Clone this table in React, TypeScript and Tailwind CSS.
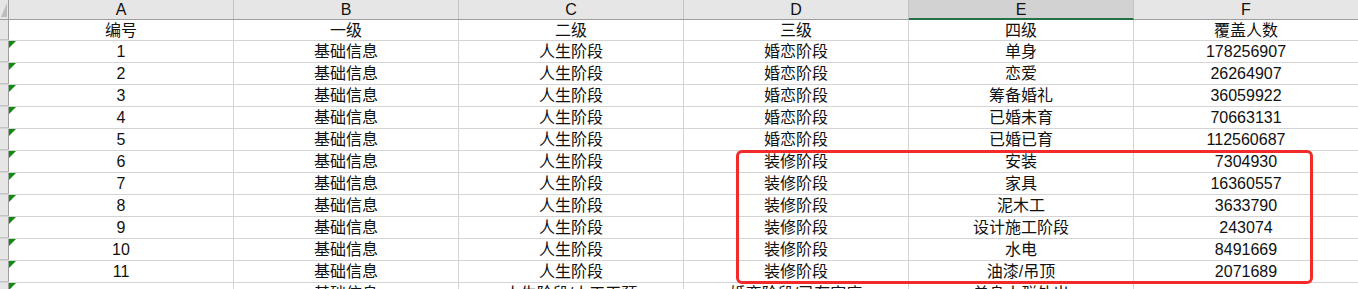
import React from "react";

const cols = ["A", "B", "C", "D", "E", "F"];

const rows: string[][] = [
  ["编号", "一级", "二级", "三级", "四级", "覆盖人数"],
  ["1", "基础信息", "人生阶段", "婚恋阶段", "单身", "178256907"],
  ["2", "基础信息", "人生阶段", "婚恋阶段", "恋爱", "26264907"],
  ["3", "基础信息", "人生阶段", "婚恋阶段", "筹备婚礼", "36059922"],
  ["4", "基础信息", "人生阶段", "婚恋阶段", "已婚未育", "70663131"],
  ["5", "基础信息", "人生阶段", "婚恋阶段", "已婚已育", "112560687"],
  ["6", "基础信息", "人生阶段", "装修阶段", "安装", "7304930"],
  ["7", "基础信息", "人生阶段", "装修阶段", "家具", "16360557"],
  ["8", "基础信息", "人生阶段", "装修阶段", "泥木工", "3633790"],
  ["9", "基础信息", "人生阶段", "装修阶段", "设计施工阶段", "243074"],
  ["10", "基础信息", "人生阶段", "装修阶段", "水电", "8491669"],
  ["11", "基础信息", "人生阶段", "装修阶段", "油漆/吊顶", "2071689"],
  ["", "基础信息", "人生阶段/人工干预", "婚恋阶段/已有家庭", "单身人群外出", ""],
];

function Flag() {
  return (
    <span className="absolute left-0 top-0 w-0 h-0 border-t-[7px] border-r-[7px] border-t-[#138a13] border-r-transparent" />
  );
}

export default function App() {
  return (
    <div
      className="relative w-[1358px] h-[289px] overflow-hidden bg-white text-[16px] text-[#111]"
      style={{ fontFamily: '"Liberation Sans", "Noto Sans CJK SC", sans-serif' }}
    >
      {/* column header */}
      <div className="flex h-[20px] bg-[#e6e6e6] border-b border-[#9e9e9e]">
        <div className="relative w-[9px] shrink-0 border-r border-[#9e9e9e]">
          <span className="absolute right-[1px] bottom-[2px] w-0 h-0 border-b-[14px] border-l-[6px] border-b-[#bcbcbc] border-l-transparent" />
        </div>
        {cols.map((c) => (
          <div
            key={c}
            className={
              c === "E"
                ? "w-[225px] shrink-0 border-r border-[#c4c4c4] bg-[#d2d2d2] border-b-2 border-b-[#217346] text-center leading-[19px] -mb-px"
                : "w-[225px] shrink-0 border-r border-[#c4c4c4] text-center leading-[19px]"
            }
          >
            {c}
          </div>
        ))}
      </div>

      {rows.map((r, i) => (
        <div key={i} className={i === 0 ? "flex h-[21px] border-b border-[#d4d4d4]" : "flex h-[22px] border-b border-[#d4d4d4]"}>
          <div className="w-[9px] shrink-0 bg-[#e6e6e6] border-r border-[#9e9e9e] border-b border-b-[#c4c4c4]" />
          {r.map((v, j) => (
            <div
              key={j}
              className="relative w-[225px] shrink-0 border-r border-[#d4d4d4] text-center leading-[21px] whitespace-nowrap"
            >
              {j === 0 && i > 0 && <Flag />}
              {v}
            </div>
          ))}
        </div>
      ))}

      {/* red annotation box */}
      <div className="absolute left-[736px] top-[150px] w-[577px] h-[134px] border-[3px] border-[#f22a2a] rounded-[6px] pointer-events-none" />
    </div>
  );
}
